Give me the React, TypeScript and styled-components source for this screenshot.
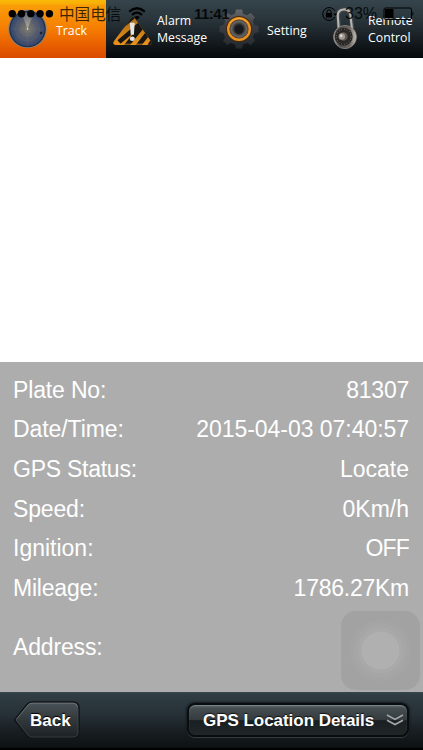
import React from "react";
import styled, { createGlobalStyle } from "styled-components";

const GlobalStyle = createGlobalStyle`
  * { box-sizing: border-box; }
  html, body { margin: 0; padding: 0; background: #000; overflow: hidden; }
`;

const Screen = styled.div`
  position: relative;
  display: flex;
  flex-direction: column;
  width: 423px;
  height: 750px;
  overflow: hidden;
  background: #fff;
  font-family: "Liberation Sans", Arial, sans-serif;
`;

const TabBar = styled.nav`
  display: grid;
  grid-template-columns: 106px 106px 106px 105px;
  flex: 0 0 58px;
  background: linear-gradient(#36454c 0, #28343a 35%, #151b1f 72%, #05080a 100%);
`;

const Tab = styled.div<{ $active?: boolean; $pad: number }>`
  display: flex;
  align-items: center;
  padding-left: ${(p) => p.$pad}px;
  padding-top: 3px;
  overflow: hidden;
  background: ${(p) =>
    p.$active
      ? "linear-gradient(#f8b908 0, #f8b006 6%, #f99d08 9%, #f67f03 48%, #e96100 76%, #d94a00 100%)"
      : "none"};
`;

const TabIcon = styled.svg<{ $gap: number }>`
  flex: 0 0 auto;
  width: 44px;
  height: 50px;
  margin-right: ${(p) => p.$gap}px;
  margin-top: -3px;
`;

const TabLabel = styled.span<{ $lines?: number }>`
  color: #fff;
  font: 12.3px/17px "Open Sans", "Noto Sans", sans-serif;
  white-space: pre;
  margin-bottom: ${(p) => (p.$lines === 2 ? 3 : 0)}px;
`;

const StatusBar = styled.div`
  position: absolute;
  top: 0;
  left: 0;
  width: 423px;
  height: 28px;
  display: flex;
  align-items: center;
  padding-left: 8px;
  color: #000;
`;

const Dots = styled.svg`
  width: 46px;
  height: 28px;
  margin-right: 5px;
`;

const Carrier = styled.span`
  width: 69px;
  font: 15.6px/26px "Noto Sans CJK SC", sans-serif;
  margin-top: -2px;
  white-space: nowrap;
  color: rgba(0, 0, 0, 0.75);
`;

const Wifi = styled.svg`
  width: 18px;
  height: 28px;
  margin-right: 48px;
`;

const Clock = styled.span`
  width: 127px;
  font: bold 15px/28px "Liberation Sans", Arial, sans-serif;
  letter-spacing: -0.5px;
  color: rgba(0, 0, 0, 0.85);
`;

const LockRing = styled.svg`
  width: 16px;
  height: 28px;
  margin-right: 8px;
`;

const Percent = styled.span`
  width: 38px;
  font: 16px/28px "Liberation Sans", Arial, sans-serif;
  white-space: nowrap;
  color: rgba(0, 0, 0, 0.85);
`;

const Battery = styled.svg`
  width: 32px;
  height: 28px;
`;

const MapArea = styled.div`
  flex: 0 0 304px;
  background: #fff;
`;

const Details = styled.dl`
  flex: 0 0 330px;
  margin: 0;
  padding: 8px 14px 0 13px;
  background: #adadad;
`;

const Row = styled.div<{ $tall?: boolean }>`
  display: flex;
  justify-content: space-between;
  align-items: center;
  height: ${(p) => (p.$tall ? 79 : 39.6)}px;
  color: #fff;
  font-size: 23px;
  line-height: 26px;
`;

const Key = styled.dt<{ $spacing?: number }>`
  letter-spacing: ${(p) => p.$spacing ?? 0}px;
`;

const Value = styled.dd<{ $spacing?: number }>`
  margin: 0;
  letter-spacing: ${(p) => p.$spacing ?? 0}px;
`;

const AssistiveButton = styled.div`
  position: absolute;
  left: 341px;
  top: 611px;
  width: 79px;
  height: 79px;
  border-radius: 15px;
  background: radial-gradient(
    circle at 39.5px 39.5px,
    #b0b0b0 0 18.5px,
    #a9a9a9 19.2px 22.5px,
    #a6a6a6 23.2px 26.5px,
    #a4a4a4 27.2px 30px,
    #a2a2a2 31px
  );
`;

const BottomBar = styled.footer`
  flex: 0 0 58px;
  display: flex;
  justify-content: space-between;
  padding: 9px 14px 0 13px;
  background: linear-gradient(#39464d 0, #303d43 4%, #263137 38%, #171d21 70%, #0d1113 96%, #000 97%);
`;

const BackButton = styled.div`
  display: grid;
  width: 67px;
  height: 40px;
  color: #fff;
  font-weight: bold;
  font-size: 17px;
  line-height: 20px;
`;

const BackShape = styled.svg`
  grid-area: 1 / 1;
  width: 67px;
  height: 40px;
`;

const BackText = styled.span`
  grid-area: 1 / 1;
  align-self: center;
  padding-left: 17px;
  text-shadow: 0 -1px 1px #000;
`;

const LocationButton = styled.div`
  display: flex;
  align-items: center;
  width: 222px;
  height: 34px;
  margin-top: 2px;
  padding-left: 14px;
  border: 2px solid #0a0d10;
  border-radius: 8px;
  background: linear-gradient(#5c6467 0, #454d50 12%, #343a3d 50%, #1a1f22 52%, #202729 100%);
  box-shadow: inset 0 1px 1px #7c8385, 0 1px 1px #384044, 0 0 2px 1px #141a1e;
  color: #fff;
  font-weight: bold;
  font-size: 17px;
  line-height: 20px;
  white-space: nowrap;
  text-shadow: 0 -1px 1px #111;
`;

const LocationText = styled.span`
  width: 183px;
  margin-top: 1px;
  letter-spacing: -0.04px;
`;

const Chevrons = styled.svg`
  width: 18px;
  height: 14px;
`;

const RadarIcon = () => (
  <TabIcon $gap={7} viewBox="0 0 44 50">
    <defs>
      <radialGradient id="radar">
        <stop offset="0" stopColor="#807c70" />
        <stop offset=".5" stopColor="#595e6c" />
        <stop offset="1" stopColor="#34476f" />
      </radialGradient>
      <linearGradient id="sweep" x1="0" x2="0" y1="1" y2="0">
        <stop offset="0" stopColor="#ddd6b5" />
        <stop offset="1" stopColor="#a9a696" stopOpacity=".6" />
      </linearGradient>
    </defs>
    <circle cx="22.5" cy="25" r="19.3" fill="#8c837b" />
    <circle cx="22.5" cy="25" r="18.3" fill="#263041" />
    <circle cx="22.5" cy="25" r="17" fill="url(#radar)" />
    <g fill="none" stroke="#8c8b83" strokeWidth=".4" opacity=".35">
      <circle cx="22.5" cy="25" r="12" />
      <circle cx="22.5" cy="25" r="7" />
      <path d="M5.5 25h34M22.5 8v34" />
    </g>
    <path d="M22.5 25 17 10q6-2.5 11.5 0Z" fill="url(#sweep)" opacity=".55" />
    <circle cx="22.5" cy="25" r=".8" fill="#fff4cf" />
    <circle cx="36" cy="29" r="1.3" fill="#17223a" />
  </TabIcon>
);

const WarningIcon = () => (
  <TabIcon $gap={2} viewBox="0 0 44 50">
    <defs>
      <linearGradient id="warn" x1="0" x2="0" y1="0" y2="1">
        <stop offset="0" stopColor="#8c6a30" />
        <stop offset=".6" stopColor="#c77c18" />
        <stop offset="1" stopColor="#f29a1d" />
      </linearGradient>
      <clipPath id="warnClip">
        <path d="M19.5 15q2.4-4 4.8 0l15.5 22q1.8 4-2.4 4H5q-4.2 0-2-4Z" />
      </clipPath>
    </defs>
    <g clipPath="url(#warnClip)">
      <path d="M0 0h44v44H0z" fill="url(#warn)" />
      <g stroke="#171612" strokeWidth="4.8">
        <path d="m4 28 20-17M8 38l26-22M8 51l25-31M20 51l21-27M32 51l10-14" />
      </g>
    </g>
    <path d="M5 40.2h32.5" stroke="#e8901e" strokeWidth=".8" />
    <path d="M18.9 18.8h4.8l-.8 12h-3.2z" fill="#e5e5e3" />
    <ellipse cx="21.3" cy="34.8" rx="2.5" ry="2.2" fill="#e5e5e3" />
  </TabIcon>
);

const GearIcon = () => (
  <TabIcon $gap={6} viewBox="0 0 44 50">
    <defs>
      <radialGradient id="hub">
        <stop offset="0" stopColor="#17191c" />
        <stop offset=".4" stopColor="#252629" />
        <stop offset=".7" stopColor="#68645f" />
        <stop offset="1" stopColor="#2b2520" />
      </radialGradient>
      <linearGradient id="gear" gradientUnits="userSpaceOnUse" x1="0" x2="0" y1="5" y2="45">
        <stop offset="0" stopColor="#696a6d" />
        <stop offset=".4" stopColor="#3b3e42" />
        <stop offset="1" stopColor="#24272b" />
      </linearGradient>
      <clipPath id="gearClip">
        <circle cx="22" cy="25" r="15.8" />
        {[0, 45, 90, 135, 180, 225, 270, 315].map((a) => (
          <path key={a} d="m17 13 2-7.5h6l2 7.5Z" transform={`rotate(${a} 22 25)`} />
        ))}
      </clipPath>
    </defs>
    <path d="M0 0h44v50H0z" fill="url(#gear)" clipPath="url(#gearClip)" />
    <circle cx="22" cy="25" r="13" fill="#47290c" />
    <circle cx="22" cy="25" r="10.8" fill="url(#hub)" stroke="#e9911f" strokeWidth="2.4" />
    <path d="M13 19a11 11 0 0 1 18 0" fill="none" stroke="#ffae40" strokeWidth=".8" />
    <circle cx="22" cy="25.5" r="4.2" fill="#17191c" />
  </TabIcon>
);

const PadlockIcon = () => (
  <TabIcon $gap={2} viewBox="0 0 44 50">
    <defs>
      <linearGradient id="steel">
        <stop offset="0" stopColor="#aaa49f" />
        <stop offset=".25" stopColor="#504d4b" />
        <stop offset=".7" stopColor="#696461" />
        <stop offset="1" stopColor="#c9c3bb" />
      </linearGradient>
    </defs>
    <g transform="translate(1 0)">
      <path d="M16.2 26 15.2 12q-.2-5.8 5.2-6.5 6.2-.8 7.2 5.5L29.5 25" fill="none" stroke="#47484a" strokeWidth="4" />
      <path d="M15.8 26 14.8 12q-.2-5.8 5.4-6.5 6.2-.8 7.2 5.5L29 25" fill="none" stroke="#b5b5b3" strokeWidth="2.1" />
      <ellipse cx="22" cy="33" rx="11.4" ry="11.6" fill="url(#steel)" stroke="#8d8681" strokeWidth=".8" />
      <circle cx="20.7" cy="32.7" r="9" fill="#292725" />
      <circle cx="20.7" cy="32.7" r="7.4" fill="none" stroke="#8f8982" strokeDasharray=".5 2.2" strokeWidth="1.2" />
      <circle cx="20.5" cy="32.5" r="4.2" fill="#5d5854" />
      <circle cx="18.8" cy="32.5" r="3.2" fill="#a09b95" />
      <circle cx="18.2" cy="31.8" r="1.2" fill="#e7e2da" />
    </g>
  </TabIcon>
);

interface DetailRow {
  label: string;
  value: string;
  labelSpacing: number;
  valueSpacing: number;
}

const rows: DetailRow[] = [
  { label: "Plate No:", value: "81307", labelSpacing: -0.15, valueSpacing: -0.25 },
  { label: "Date/Time:", value: "2015-04-03 07:40:57", labelSpacing: -0.08, valueSpacing: -0.04 },
  { label: "GPS Status:", value: "Locate", labelSpacing: -0.25, valueSpacing: 0 },
  { label: "Speed:", value: "0Km/h", labelSpacing: -0.15, valueSpacing: 0 },
  { label: "Ignition:", value: "OFF", labelSpacing: 0, valueSpacing: -0.8 },
  { label: "Mileage:", value: "1786.27Km", labelSpacing: -0.2, valueSpacing: -0.25 },
];

export default function App() {
  return (
    <Screen>
      <GlobalStyle />
      <TabBar>
        <Tab $active $pad={5}>
          <RadarIcon />
          <TabLabel>Track</TabLabel>
        </Tab>
        <Tab $pad={5}>
          <WarningIcon />
          <TabLabel $lines={2}>{"Alarm\nMessage"}</TabLabel>
        </Tab>
        <Tab $pad={5}>
          <GearIcon />
          <TabLabel>Setting</TabLabel>
        </Tab>
        <Tab $pad={4}>
          <PadlockIcon />
          <TabLabel $lines={2}>{"Remote\nControl"}</TabLabel>
        </Tab>
      </TabBar>
      <MapArea />
      <Details>
        {rows.map(({ label, value, labelSpacing, valueSpacing }) => (
          <Row key={label}>
            <Key $spacing={labelSpacing}>{label}</Key>
            <Value $spacing={valueSpacing}>{value}</Value>
          </Row>
        ))}
        <Row $tall>
          <Key $spacing={-0.15}>Address:</Key>
        </Row>
      </Details>
      <BottomBar>
        <BackButton>
          <BackShape viewBox="0 0 67 40">
            <defs>
              <linearGradient id="back" x1="0" x2="0" y1="0" y2="1">
                <stop offset="0" stopColor="#4b5458" />
                <stop offset=".5" stopColor="#31383c" />
                <stop offset="1" stopColor="#1b2023" />
              </linearGradient>
            </defs>
            <path d="M19 1h41q6 0 6 6v24q0 6-6 6H19q-3 0-5-2.5L1.5 19 14 3.5Q16 1 19 1Z" fill="url(#back)" stroke="#101518" strokeWidth="1.6" />
            <path d="M3.2 18.5 15 4q1.5-1.8 4-1.8h41q4.2 0 4.5 4" fill="none" stroke="#7b8386" strokeWidth=".7" />
            <path d="M65 7v24q0 5-5 5H19q-2.5 0-4-2L3 19" fill="none" stroke="#485155" strokeWidth=".6" />
          </BackShape>
          <BackText>Back</BackText>
        </BackButton>
        <LocationButton>
          <LocationText>GPS Location Details</LocationText>
          <Chevrons viewBox="0 0 18 14" fill="none" stroke="#a3a7a8" strokeWidth="1.7">
            <path d="m1 2 8 4.4L17 2M1 7.2l8 4.4 8-4.4" />
          </Chevrons>
        </LocationButton>
      </BottomBar>
      <AssistiveButton />
      <StatusBar>
        <Dots viewBox="0 0 46 28">
          {[4.3, 13.5, 22.8, 32.1, 41.4].map((x) => (
            <circle key={x} cx={x} cy="13.8" r="3.7" />
          ))}
        </Dots>
        <Carrier>中国电信</Carrier>
        <Wifi viewBox="0 0 18 28" fill="none" stroke="#000" strokeWidth="2.2">
          <path d="M1.2 11.6q7.8-6.7 15.6 0M4 14.8q5-4.2 10 0" />
          <path d="m6.2 17.1q2.8-2 5.6 0L9 20Z" fill="#000" stroke="none" />
        </Wifi>
        <Clock>11:41</Clock>
        <LockRing viewBox="0 0 16 28" fill="none" stroke="#000">
          <path d="M14 11a6.5 6.5 0 1 0 0 6" />
          <path d="m12.3 13.5 1.9 2.5 1.8-2.5Z" fill="#000" stroke="none" />
          <path d="M6 13v-1.2a2 2 0 0 1 4 0V13" />
          <path d="M5 13h6v4.5H5z" fill="#000" stroke="none" />
        </LockRing>
        <Percent>33%</Percent>
        <Battery viewBox="0 0 32 28">
          <rect x="1" y="8" width="27.5" height="11.5" rx="1.5" fill="none" stroke="#000" />
          <rect x="2" y="9" width="8.5" height="9.5" />
          <path d="M29.5 11.5q2 2.2 0 4.4Z" />
        </Battery>
      </StatusBar>
    </Screen>
  );
}
